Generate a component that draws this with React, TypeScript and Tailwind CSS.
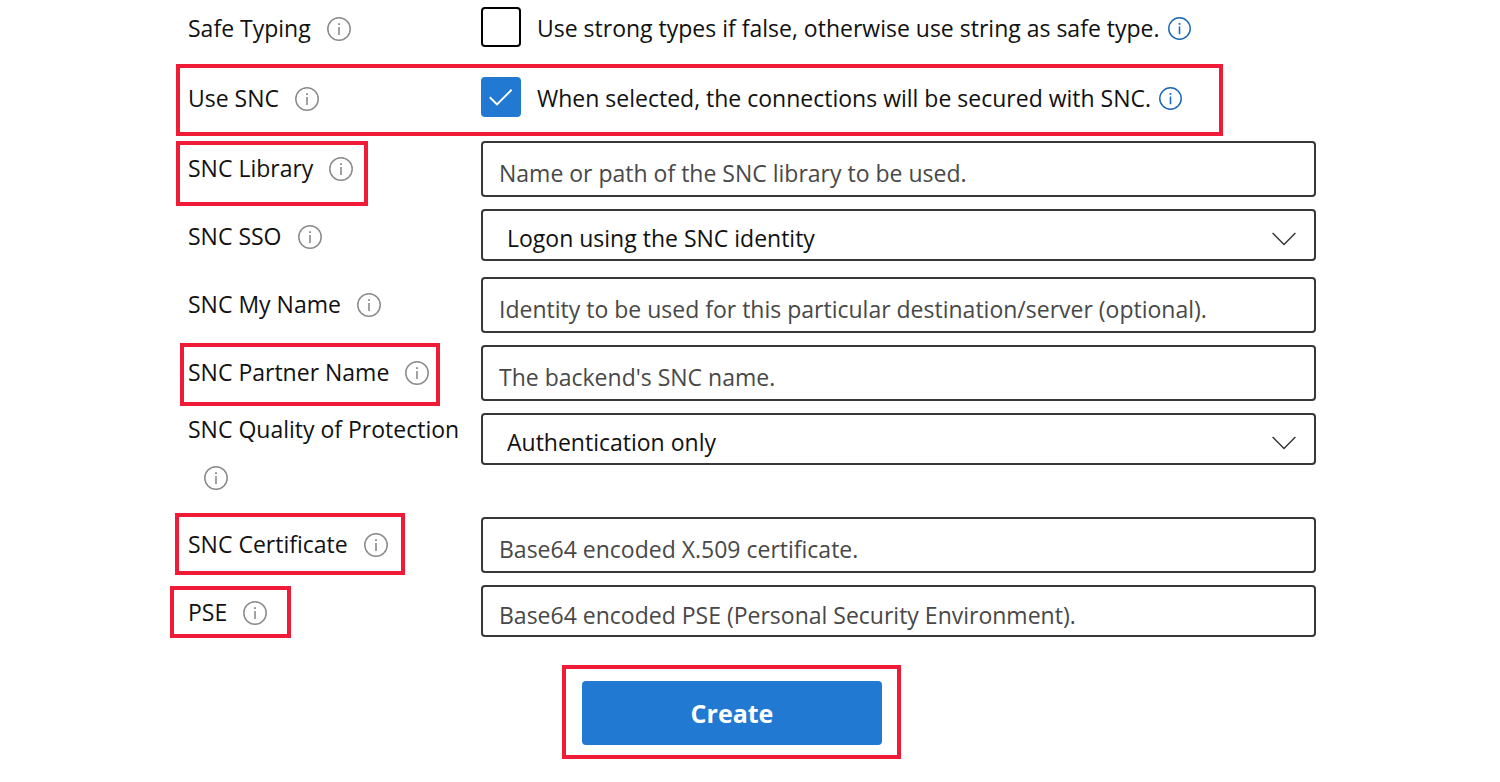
import { type ReactNode } from "react";

function InfoIcon({ className }: { className: string }) {
  return (
    <svg viewBox="0 0 24 24" fill="none" className={className} aria-hidden="true">
      <circle cx="12" cy="12" r="11.2" stroke="currentColor" strokeWidth="1.5" />
      <path d="M11.1 6.2h1.8v1.8h-1.8zM11.2 10h1.6v8h-1.6z" fill="currentColor" />
    </svg>
  );
}

type RowProps = {
  id: string;
  label: string;
  size?: string;
  labelPad?: string;
  frame?: string;
  children: ReactNode;
};

function Row({ id, label, size = "min-h-14", labelPad = "pt-3", frame, children }: RowProps) {
  return (
    <div className={`relative flex items-start ${size}`}>
      <div className={`flex w-[293px] shrink-0 flex-wrap items-center gap-y-4 ${labelPad}`}>
        <label htmlFor={id} className="pb-0.5 leading-[30px] whitespace-nowrap">
          {label}
        </label>
        <InfoIcon className="mx-4 my-1 size-6 text-[#8a8a8a]" />
      </div>
      <div className="min-w-0 flex-1">{children}</div>
      {frame && <div className={`pointer-events-none absolute border-4 border-[#f01b36] ${frame}`} />}
    </div>
  );
}

function CheckField({ id, text, checked = false }: { id: string; text: string; checked?: boolean }) {
  return (
    <div className="flex items-start">
      <span className="relative flex size-10 shrink-0">
        <input
          id={id}
          type="checkbox"
          defaultChecked={checked}
          className="peer size-10 appearance-none rounded-sm border-2 border-black bg-white checked:border-[#2179d1] checked:bg-[#2179d1]"
        />
        <svg
          viewBox="0 0 40 40"
          fill="none"
          className="pointer-events-none absolute inset-0 hidden size-10 peer-checked:block"
          aria-hidden="true"
        >
          <path d="M8.8 20.2l7.2 7.2L30.6 12.8" stroke="white" strokeWidth="2" />
        </svg>
      </span>
      <label htmlFor={id} className="ml-4 pt-[5px] leading-8 whitespace-nowrap">
        {text}
      </label>
      <InfoIcon className="mt-[10px] ml-2 size-[23px] shrink-0 text-[#1a66b8]" />
    </div>
  );
}

function TextField({ id, hint, height = "h-14" }: { id: string; hint: string; height?: string }) {
  return (
    <input
      id={id}
      type="text"
      placeholder={hint}
      className={`block w-full rounded-sm border-2 border-[#373737] bg-white px-4 pt-2 placeholder:text-[#484848] ${height}`}
    />
  );
}

function SelectField({ id, option }: { id: string; option: string }) {
  return (
    <div className="relative">
      <select
        id={id}
        className="block h-[52px] w-full appearance-none rounded-sm border-2 border-[#373737] bg-white pt-1.5 pr-16 pl-6"
      >
        <option>{option}</option>
      </select>
      <svg
        viewBox="0 0 24 14"
        fill="none"
        className="pointer-events-none absolute top-[23px] right-5 h-[14px] w-6"
        aria-hidden="true"
      >
        <path d="M.6 1L12 12.4 23.4 1" stroke="#333" strokeWidth="1.4" />
      </svg>
    </div>
  );
}

export default function App() {
  return (
    <form
      onSubmit={(e) => e.preventDefault()}
      className="flex min-h-screen flex-col bg-white pr-[184px] pl-[188px] pt-[7px] font-['Open_Sans','Noto_Sans',sans-serif] text-[23px] text-[#111]"
    >
      <div className="flex flex-col gap-3">
        <Row id="safe-typing" label="Safe Typing" size="h-[58px]" labelPad="pt-1.5">
          <CheckField id="safe-typing" text="Use strong types if false, otherwise use string as safe type." />
        </Row>
        <Row
          id="use-snc"
          label="Use SNC"
          size="h-[52px]"
          labelPad="pt-1.5"
          frame="-top-[13px] -bottom-[7px] -left-3 right-[93px]"
        >
          <CheckField id="use-snc" text="When selected, the connections will be secured with SNC." checked />
        </Row>
        <Row id="snc-library" label="SNC Library" frame="top-0 -left-3 h-[65px] w-48">
          <TextField id="snc-library" hint="Name or path of the SNC library to be used." />
        </Row>
        <Row id="snc-sso" label="SNC SSO">
          <SelectField id="snc-sso" option="Logon using the SNC identity" />
        </Row>
        <Row id="snc-my-name" label="SNC My Name">
          <TextField id="snc-my-name" hint="Identity to be used for this particular destination/server (optional)." />
        </Row>
        <Row id="snc-partner" label="SNC Partner Name" frame="-top-[2px] -left-2 h-[63px] w-[260px]">
          <TextField id="snc-partner" hint="The backend's SNC name." />
        </Row>
        <Row id="snc-quality" label="SNC Quality of Protection" size="min-h-[92px]" labelPad="pt-px">
          <SelectField id="snc-quality" option="Authentication only" />
        </Row>
        <Row id="snc-certificate" label="SNC Certificate" frame="-top-1 -left-[13px] h-[62px] w-[230px]">
          <TextField id="snc-certificate" hint="Base64 encoded X.509 certificate." />
        </Row>
        <Row id="pse" label="PSE" size="min-h-[52px]" frame="top-px -left-[18px] h-[52px] w-[121px]">
          <TextField id="pse" hint="Base64 encoded PSE (Personal Security Environment)." height="h-[52px]" />
        </Row>
      </div>
      <div className="mt-7 mr-[41px] flex justify-center">
        <div className="border-4 border-[#f01b36] pt-3 pr-[15px] pb-[10px] pl-4">
          <button type="submit" className="block h-16 w-[300px] rounded-sm bg-[#2179d1] pt-0.5 text-[25px] font-bold text-white">
            Create
          </button>
        </div>
      </div>
    </form>
  );
}
